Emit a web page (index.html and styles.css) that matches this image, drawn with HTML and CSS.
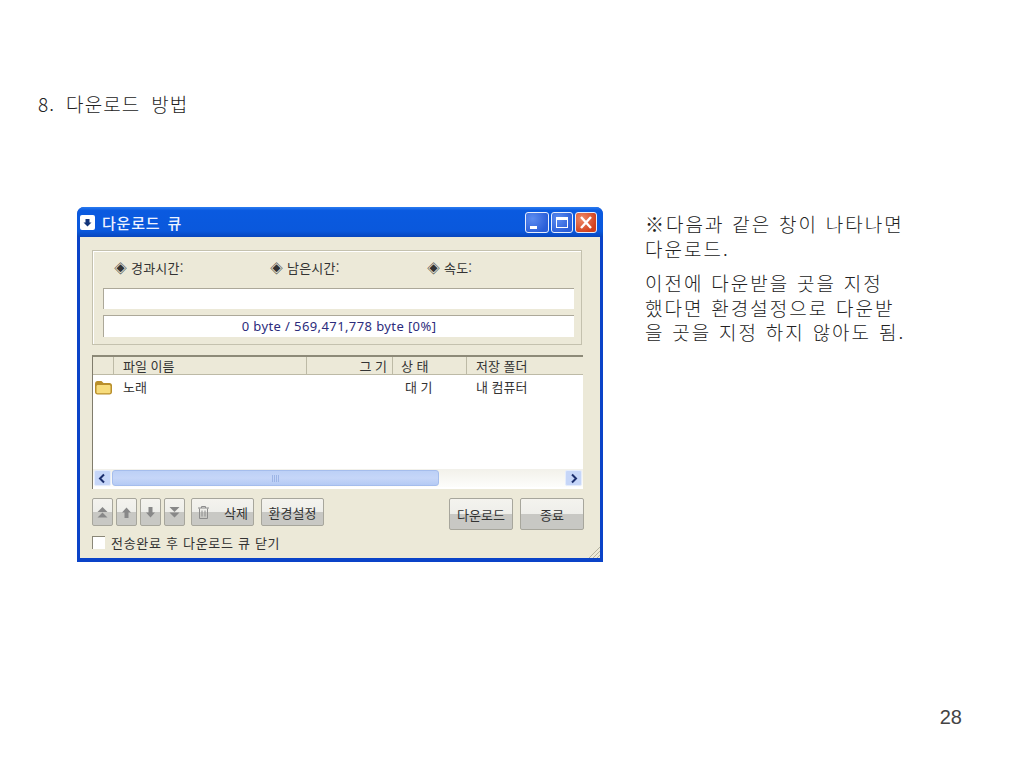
FILE: index.html
```html
<!DOCTYPE html>
<html lang="ko">
<head>
<meta charset="utf-8">
<title>다운로드 방법</title>
<link rel="stylesheet" href="styles.css">
</head>
<body>
<main class="slide">
  <h1 class="heading">8. 다운로드 방법</h1>
  <div class="content">
    <section class="window">
      <header class="titlebar">
        <svg class="app-icon" width="17" height="17" viewBox="0 0 17 17"><rect x="1" y="1" width="15" height="15" rx="2" fill="#fff"/><path d="M6.500 5h4v3.500h2L8.500 12.500 4.500 8.500h2z" fill="#12347a"/></svg>
        <span class="title-text">다운로드 큐</span>
        <div class="caption-buttons">
          <span class="cap cap-blue cap-min"><svg width="24" height="21" viewBox="0 0 24 21"><rect x="5" y="14" width="7" height="3" fill="#fff"/></svg></span>
          <span class="cap cap-blue"><svg width="22" height="21" viewBox="0 0 22 21"><path d="M5 5h12v11H5z M6 8v7h10V8z" fill="#fff" fill-rule="evenodd"/></svg></span>
          <span class="cap cap-red"><svg width="22" height="21" viewBox="0 0 22 21"><path d="M6 5l10 11M16 5L6 16" stroke="#fff" stroke-width="2.400" fill="none"/></svg></span>
        </div>
      </header>
      <div class="body">
        <section class="group">
          <div class="stats">
            <span class="stat stat-a">◈ 경과시간:</span>
            <span class="stat stat-b">◈ 남은시간:</span>
            <span class="stat">◈ 속도:</span>
          </div>
          <div class="field"></div>
          <div class="field field-progress">0 byte / 569,471,778 byte [0%]</div>
        </section>
        <section class="list">
          <div class="list-head">
            <span class="col-0"></span>
            <span class="col-name">파일 이름</span>
            <span class="col-size">그 기</span>
            <span class="col-state">상 태</span>
            <span class="col-folder">저장 폴더</span>
          </div>
          <div class="list-row">
            <span class="col-0">
              <svg width="19" height="15" viewBox="0 0 19 15"><path d="M1 4c0-2 1-3 2.500-3h4l2 2h6c1.500 0 2.500 1 2.500 2.500V12c0 1.500-1 2.500-2.500 2.500h-12C2 14.500 1 13.500 1 12z" fill="#b98f2c"/><path d="M2.500 6.500c0-1 .6-1.500 1.500-1.500h11c1 0 1.500.5 1.500 1.500V12c0 .8-.5 1.300-1.300 1.300H3.800C3 13.300 2.500 12.800 2.500 12z" fill="#f7dc7c"/></svg>
            </span>
            <span class="col-name">노래</span>
            <span class="col-size"></span>
            <span class="col-state">대 기</span>
            <span class="col-folder">내 컴퓨터</span>
          </div>
          <div class="scrollbar">
            <span class="sb-btn"><svg width="15" height="15" viewBox="0 0 15 15"><path d="M9 3.500L5 7.500l4 4" stroke="#1c2f6e" stroke-width="2" fill="none"/></svg></span>
            <span class="sb-thumb">
              <svg width="8" height="7" viewBox="0 0 8 7"><path d="M.5 0v7M2.500 0v7M4.500 0v7M6.500 0v7" stroke="#9db5e6"/></svg>
            </span>
            <span class="sb-track"></span>
            <span class="sb-btn"><svg width="15" height="15" viewBox="0 0 15 15"><path d="M6 3.500l4 4-4 4" stroke="#1c2f6e" stroke-width="2" fill="none"/></svg></span>
          </div>
        </section>
        <div class="toolbar">
          <button class="btn btn-icon"><svg width="13" height="13" viewBox="0 0 13 13"><path d="M6.500 1L11.500 6h-10zM6.500 6.500l5 5h-10z" fill="#888"/></svg></button>
          <button class="btn btn-icon"><svg width="13" height="13" viewBox="0 0 13 13"><path d="M6.500 1.500L11 6.500H8.500V12h-4V6.500H2z" fill="#888"/></svg></button>
          <button class="btn btn-icon"><svg width="13" height="13" viewBox="0 0 13 13"><path d="M6.500 11.500L2 6.500h2.500V1h4v5.500H11z" fill="#888"/></svg></button>
          <button class="btn btn-icon"><svg width="13" height="13" viewBox="0 0 13 13"><path d="M1.500 1h10l-5 5zM1.500 6.500h10l-5 5z" fill="#888"/></svg></button>
          <button class="btn btn-delete"><svg width="13" height="15" viewBox="0 0 13 15"><path d="M1 3h11M4.500 3V1.500h4V3M2.500 3.500v10h8v-10M5 5.500v6M8 5.500v6" stroke="#8c8c8c" fill="none"/></svg><span>삭제</span></button>
          <button class="btn btn-settings">환경설정</button>
          <button class="btn btn-main btn-download">다운로드</button>
          <button class="btn btn-main">종료</button>
        </div>
        <label class="check"><span class="checkbox"></span>전송완료 후 다운로드 큐 닫기</label>
        <svg class="grip" width="13" height="13" viewBox="0 0 13 13"><path d="M13 2L2 13M13 6l-7 7M13 10l-3 3" stroke="#b5b2a0"/></svg>
      </div>
    </section>
    <aside class="note">
      <p>※다음과 같은 창이 나타나면<br>다운로드.</p>
      <p>이전에 다운받을 곳을 지정<br>했다면 환경설정으로 다운받<br>을 곳을 지정 하지 않아도 됨.</p>
    </aside>
  </div>
  <footer class="page-number">28</footer>
</main>
</body>
</html>
```

FILE: styles.css
```css
* { box-sizing: border-box; }
html, body { margin: 0; padding: 0; background: #fff; }
body { font-family: "Noto Sans CJK KR", "Noto Sans", sans-serif; font-weight: 300; color: #222; }
.slide { width: 1024px; height: 768px; display: flex; flex-direction: column; overflow: hidden; }

.heading { margin: 91px 0 0 38px; font-size: 19px; line-height: 26px; font-weight: 300; letter-spacing: 1.100px; word-spacing: 4.500px; color: #222; }

.content { display: flex; margin: 90px 0 0 77px; align-items: flex-start; }

.window { width: 526px; height: 355px; display: flex; flex-direction: column; background: #0a43c8; border-radius: 7px 7px 0 0; padding: 0 3px 4px; flex: none; }
.titlebar { height: 30px; margin: 0 -3px; padding: 0 6px 0 2px; display: flex; align-items: center; color: #fff; border-radius: 7px 7px 0 0; background: linear-gradient(#2a7cf0 0, #0a5ae0 12%, #0a58dc 80%, #0846bd 100%); }
.app-icon { flex: none; }
.title-text { margin-left: 6px; font-size: 15px; font-weight: 500; letter-spacing: .8px; word-spacing: 2px; color: #eef3ff; }
.caption-buttons { margin-left: auto; display: flex; gap: 2px; }
.cap { width: 22px; height: 21px; border: 1px solid #e8eefc; border-radius: 3px; display: block; }
.cap-min { width: 24px; }
.cap svg { display: block; margin: -1px; }
.cap-blue { background: radial-gradient(circle at 30% 30%, #5c8cf0, #2a5ed8 75%); }
.cap-red { background: radial-gradient(circle at 30% 30%, #ef8a68, #d2401c 75%); }

.body { position: relative; flex: 1; background: #ece9d8; padding: 13px 0 0 12px; display: flex; flex-direction: column; font-weight: 400; }

.group { width: 490px; height: 95px; border: 1px solid #c4c1ae; box-shadow: inset 1px 1px 0 #fff; padding: 0 7px 0 10px; }
.stats { display: flex; height: 34px; margin-bottom: 3px; align-items: center; padding-left: 11px; font-size: 13px; letter-spacing: .2px; color: #333; }
.stat-a { width: 156px; }
.stat-b { width: 157px; }
.field { width: 471px; height: 21px; margin-bottom: 6px; background: #fff; border-top: 1px solid #aca899; border-left: 1px solid #aca899; }
.field-progress { height: 22px; text-align: center; font-size: 13px; line-height: 20px; letter-spacing: .4px; color: #2c2c7c; font-family: "Noto Sans", "Noto Sans CJK KR", sans-serif; }

.list { width: 491px; height: 134px; margin-top: 10px; background: #fff; border-left: 1px solid #807c6c; display: flex; flex-direction: column; border-top: 2px solid #8d8a78; }
.list-head, .list-row { display: grid; grid-template-columns: 21px 193px 86px 74px 1fr; font-size: 13px; color: #333; }
.list-head { height: 18px; line-height: 18px; background: #ece9d8; border-bottom: 1px solid #bdbaa6; }
.list-head span { border-right: 1px solid #bdbaa6; }
.list-head span:last-child { border-right: 0; }
.col-name { padding-left: 9px; }
.col-size { text-align: right; padding-right: 5px; }
.col-state { padding-left: 8px; }
.col-folder { padding-left: 9px; }
.list-row { height: 93px; line-height: 24px; }
.list-row .col-state { padding-left: 12px; }
.list-row .col-0 svg { display: block; margin: 5px 0 0 1px; }

.scrollbar { height: 18px; margin-top: 1px; display: flex; align-items: center; padding: 0 1px; background: linear-gradient(#f2f1ea, #fdfdfb); }
.sb-btn { width: 17px; height: 16px; border-radius: 2px; background: #c6d6f8; border: 1px solid #e4ecfc; display: flex; align-items: center; justify-content: center; }
.sb-thumb { width: 327px; height: 16px; margin-left: 1px; background: linear-gradient(#bcd0f6, #c6d6f8 50%, #b4caf4); border: 1px solid #a5bdec; border-radius: 3px; display: flex; align-items: center; justify-content: center; }
.sb-track { flex: 1; }

.toolbar { display: flex; margin-top: 9px; align-items: flex-start; }
.btn { height: 28px; padding: 0; border: 1px solid #a7a69c; border-radius: 2px; background: linear-gradient(#f4f3ee 0, #eeeeea 50%, #c8c8c4 50%, #c8c8c4 100%); font-family: inherit; font-size: 13px; color: #333; display: flex; align-items: center; justify-content: center; }
.btn-icon { width: 21px; margin-right: 3px; }
.btn-delete { width: 63px; margin-left: 3px; gap: 14px; }
.btn-settings { width: 63px; margin-left: 7px; }
.btn-main { width: 64px; height: 32px; margin-left: 7px; }
.btn-download { margin-left: auto; }
.toolbar .btn-main:last-child { margin-right: 16px; }

.check { display: flex; align-items: center; margin-top: 3px; font-size: 13px; color: #333; letter-spacing: .7px; }
.checkbox { width: 13px; height: 13px; margin-right: 6px; background: #fff; border-top: 1px solid #8a8778; border-left: 1px solid #8a8778; }
.grip { position: absolute; right: 0; bottom: 0; }

.note { width: 290px; margin-left: 42px; padding-top: 5px; font-size: 19px; line-height: 24.500px; letter-spacing: 2px; word-spacing: .5px; color: #222; }
.note p { margin: 0 0 10px; }

.page-number { margin: auto 62px 39px 0; text-align: right; font-family: "Liberation Sans", sans-serif; font-size: 20px; line-height: 24px; color: #444; }
```
